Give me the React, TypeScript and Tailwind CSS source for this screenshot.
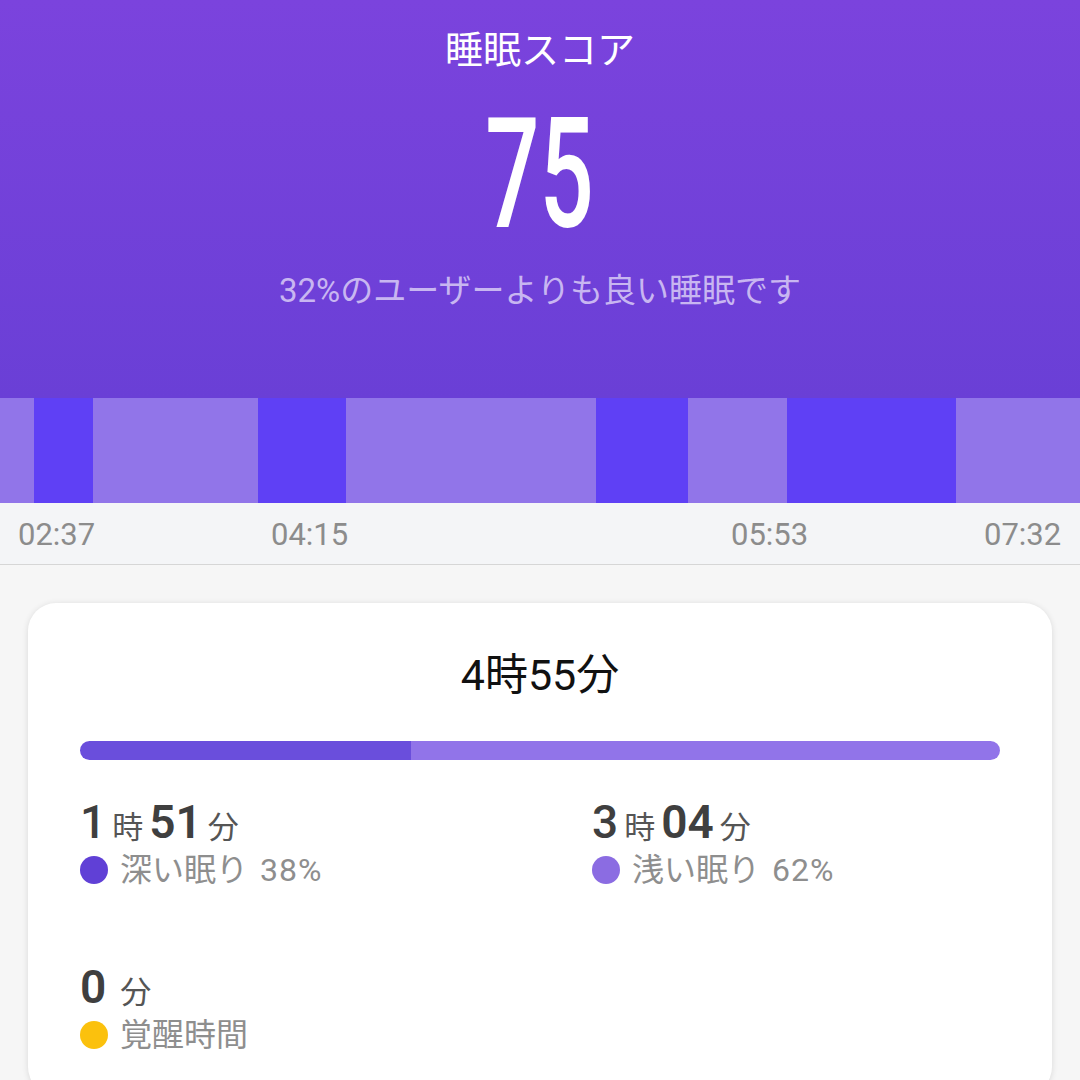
import React from 'react';

const font = "font-['Roboto','Noto_Sans_CJK_JP',sans-serif]";

// sleep stage timeline segments (light / deep)
const segments = [
    'w-[34px] bg-[#9175e9]',
    'w-[59px] bg-[#5f40f5]',
    'w-[165px] bg-[#9175e9]',
    'w-[88px] bg-[#5f40f5]',
    'w-[250px] bg-[#9175e9]',
    'w-[92px] bg-[#5f40f5]',
    'w-[99px] bg-[#9175e9]',
    'w-[169px] bg-[#5f40f5]',
    'flex-1 bg-[#9175e9]',
];

const times = [
    { label: '02:37', pos: 'left-[18px]' },
    { label: '04:15', pos: 'left-[271px]' },
    { label: '05:53', pos: 'left-[731px]' },
    { label: '07:32', pos: 'left-[984px]' },
];

interface StatProps {
    hours?: string;
    minutes: string;
    label: string;
    percent?: string;
    dot: string;
}

const Stat: React.FC<StatProps> = ({ hours, minutes, label, percent, dot }) => {
    return (
        <div className="pl-[52px]">
            <div className="flex items-baseline gap-[6px] h-[56px] text-[#3f3f3f]">
                {hours && (
                    <>
                        <span className="text-[46px] leading-[56px] font-medium">{hours}</span>
                        <span className="text-[31px] text-[#555]">時</span>
                    </>
                )}
                <span className="text-[46px] leading-[56px] font-semibold">{minutes}</span>
                <span className={`text-[31px] text-[#555] ${hours ? '' : 'ml-[8px]'}`}>分</span>
            </div>
            <div className="flex items-center gap-[12px] h-[40px]">
                <span className={`w-[28px] h-[28px] rounded-full ${dot}`} />
                <span className="text-[32px] leading-[40px] text-[#8e8e8e]">
                    {label}
                    {percent && <span className="ml-[12px] tracking-[1px]">{percent}</span>}
                </span>
            </div>
        </div>
    );
};

export default function App() {
    return (
        <div className={`w-[1080px] h-[1080px] overflow-hidden bg-[#f6f6f6] ${font}`}>
            {/* Score header */}
            <div className="h-[398px] bg-linear-to-b from-[#7b43dd] to-[#6a3fd6] flex flex-col items-center pt-[26px] text-white">
                <div className="text-[38px] leading-[48px]">睡眠スコア</div>
                <div className="mt-[24px] h-[154px] text-[154px] leading-[154px] font-medium scale-x-[0.62]">75</div>
                <div className="mt-[19px] text-[33px] leading-[40px] text-[#c8b6f1]">
                    32%のユーザーよりも良い睡眠です
                </div>
            </div>

            {/* Stage timeline */}
            <div className="flex h-[105px]">
                {segments.map((cls, i) => (
                    <div key={i} className={`h-full ${cls}`} />
                ))}
            </div>

            {/* Time axis */}
            <div className="relative h-[62px] bg-[#f4f5f7] border-b border-[#d6d6d6]">
                {times.map(t => (
                    <span
                        key={t.label}
                        className={`absolute top-[12px] ${t.pos} text-[31px] leading-[40px] text-[#8c8c8c]`}
                    >
                        {t.label}
                    </span>
                ))}
            </div>

            {/* Summary card */}
            <div className="mx-[28px] mt-[38px] bg-white rounded-[28px] shadow-[0_1px_6px_rgba(0,0,0,0.12)] pt-[48px] pb-[40px]">
                <div className="text-center text-[43px] leading-[48px] text-[#111]">4時55分</div>
                <div className="mx-[52px] mt-[42px] h-[19px] rounded-full overflow-hidden flex">
                    <div className="w-[36%] bg-[#6a4edc]" />
                    <div className="flex-1 bg-[#9174e9]" />
                </div>

                <div className="grid grid-cols-2 mt-[34px] gap-y-[69px]">
                    <Stat hours="1" minutes="51" label="深い眠り" percent="38%" dot="bg-[#6040d6]" />
                    <Stat hours="3" minutes="04" label="浅い眠り" percent="62%" dot="bg-[#8b6ce2]" />
                    <Stat minutes="0" label="覚醒時間" dot="bg-[#fbc10d]" />
                </div>
            </div>
        </div>
    );
}
